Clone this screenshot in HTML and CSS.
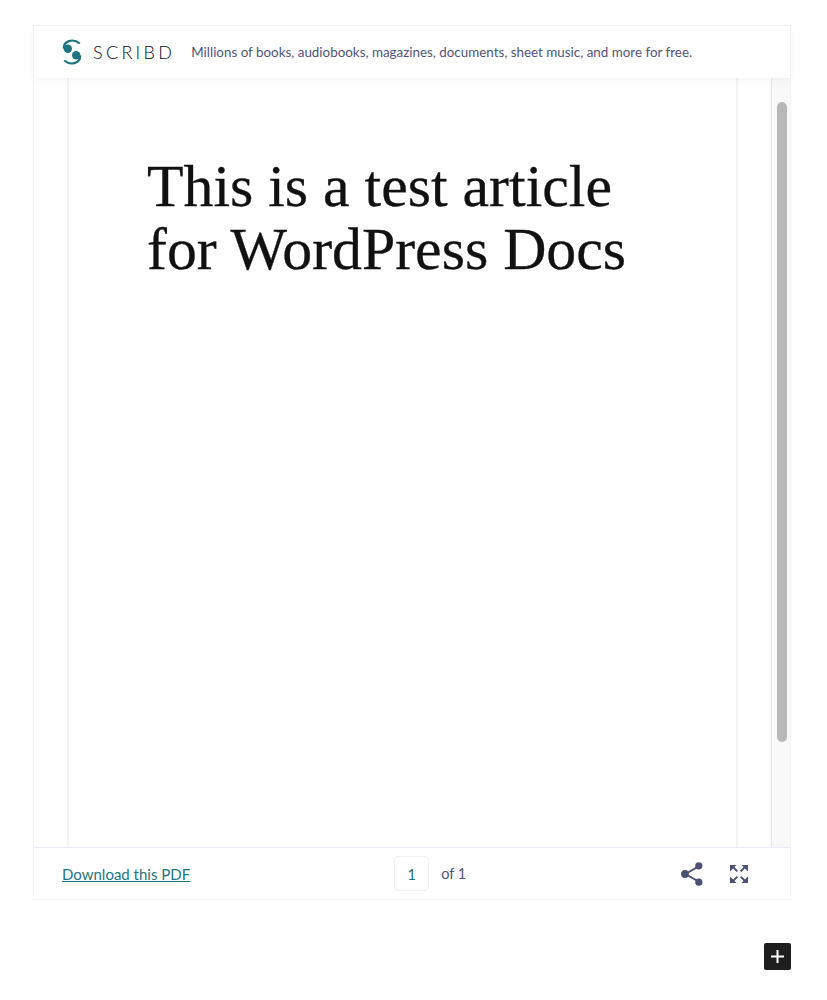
FILE: index.html
```html
<!DOCTYPE html>
<html lang="en">
<head>
  <meta charset="UTF-8">
  <meta name="viewport" content="width=device-width, initial-scale=1.0">
  <title>Scribd Embed</title>
  <link rel="stylesheet" href="styles.css">
</head>
<body>
  <div class="embed">
    <div class="embed-header">
      <svg class="logo-mark" width="20" height="26" viewBox="0 0 20 26">
        <circle cx="5.800" cy="9.800" r="4.200" fill="#1e7480"/>
        <circle cx="14.200" cy="16.200" r="4.200" fill="#1e7480"/>
        <path d="M1.800 9.500 C1.500 2.500 10.500 -1.500 17.800 4.500" fill="none" stroke="#1e7480" stroke-width="2.200"/>
        <path d="M18.200 16.500 C18.500 23.500 9.500 27.500 2.200 21.500" fill="none" stroke="#1e7480" stroke-width="2.200"/>
      </svg>
      <span class="logo-text">SCRIBD</span>
      <span class="tagline">Millions of books, audiobooks, magazines, documents, sheet music, and more for free.</span>
    </div>

    <div class="embed-body">
      <div class="doc-gutter"></div>
      <div class="doc-page">
        <h1>This is a test article for WordPress Docs</h1>
      </div>
      <div class="doc-gap"></div>
      <div class="scroll-track">
        <div class="scroll-thumb"></div>
      </div>
    </div>

    <div class="embed-footer">
      <a class="download" href="#">Download this PDF</a>
      <div class="pager">
        <span class="page-box">1</span>
        <span class="page-of">of 1</span>
      </div>
      <div class="actions">
        <svg width="24" height="26" viewBox="0 0 24 26">
          <path d="M18.500 5.500 L5.500 13 L18.500 20.500" fill="none" stroke="#4a5173" stroke-width="2"/>
          <circle cx="18.800" cy="4.800" r="3.600" fill="#4a5173"/>
          <circle cx="5" cy="13" r="3.900" fill="#4a5173"/>
          <circle cx="18.800" cy="21.200" r="3.600" fill="#4a5173"/>
        </svg>
        <svg width="20" height="20" viewBox="0 0 20 20">
          <path d="M1 1 H7.500 L5.400 3.100 L9 6.700 L7.700 8 L4.100 4.400 L1 7.500 Z" fill="#4a5173"/>
          <path d="M19 1 H12.500 L14.600 3.100 L11 6.700 L12.300 8 L15.900 4.400 L19 7.500 Z" fill="#4a5173"/>
          <path d="M1 19 H7.500 L5.400 16.900 L9 13.300 L7.700 12 L4.100 15.600 L1 12.500 Z" fill="#4a5173"/>
          <path d="M19 19 H12.500 L14.600 16.900 L11 13.300 L12.300 12 L15.900 15.600 L19 12.500 Z" fill="#4a5173"/>
        </svg>
      </div>
    </div>
  </div>

  <div class="plus-row">
    <button class="plus-button">
      <svg width="15" height="15" viewBox="0 0 15 15">
        <path d="M7.500 1 V14 M1 7.500 H14" stroke="#fff" stroke-width="2"/>
      </svg>
    </button>
  </div>
</body>
</html>
```

FILE: styles.css
```css
body {
  font-family: Lato, Arial, sans-serif;
  margin: 0;
  padding: 25px 36px 0 33px;
  background-color: #fff;
}

.embed {
  display: flex;
  flex-direction: column;
  height: 875px;
  border: 1px solid #f3f3f8;
  box-sizing: border-box;
}

.embed-header {
  display: flex;
  align-items: center;
  height: 52px;
  flex: none;
  padding-left: 28px;
  background: #fff;
  box-shadow: 0 2px 8px rgba(0, 0, 0, 0.05);
  position: relative;
}

.logo-mark {
  margin-right: 11px;
}

.logo-text {
  font-weight: 300;
  font-size: 18px;
  letter-spacing: 3.3px;
  color: #0c0c1a;
  margin-right: 16px;
}

.tagline {
  font-size: 13.4px;
  color: #4f5577;
}

.embed-body {
  display: flex;
  flex: 1;
  min-height: 0;
}

.doc-gutter {
  width: 35px;
  flex: none;
  border-right: 2px solid #f3f3f5;
  box-sizing: border-box;
}

.doc-page {
  width: 667px;
  flex: none;
  box-sizing: border-box;
  padding: 77px 60px 0 78px;
}

.doc-page h1 {
  margin: 0;
  font-family: "Liberation Serif", serif;
  font-weight: 400;
  font-size: 59.800px;
  line-height: 63px;
  color: #111;
  -webkit-text-stroke: 0.3px #111;
}

.doc-gap {
  width: 35px;
  flex: none;
  border-left: 2px solid #f3f3f5;
  box-sizing: border-box;
}

.scroll-track {
  flex: 1;
  border-left: 1px solid #e6e6e8;
  background: #f9f9f9;
  padding: 24px 3px 0 5px;
}

.scroll-thumb {
  height: 640px;
  width: 10px;
  background: #b8b8b8;
  border-radius: 5px;
}

.embed-footer {
  display: flex;
  align-items: center;
  height: 51px;
  flex: none;
  border-top: 1px solid #ebebf5;
  padding: 0 41px 0 28px;
  position: relative;
}

.download {
  font-size: 15px;
  color: #1e7480;
}

.pager {
  display: flex;
  align-items: center;
  margin-left: 204px;
}

.page-box {
  width: 35px;
  height: 35px;
  line-height: 35px;
  text-align: center;
  box-sizing: border-box;
  border: 1px solid #f0f0f5;
  border-radius: 4px;
  font-size: 14.500px;
  color: #1e7480;
  margin-right: 12px;
}

.page-of {
  font-size: 14.500px;
  color: #4f5577;
}

.actions {
  display: flex;
  align-items: center;
  gap: 25px;
  margin-left: auto;
}

.plus-row {
  display: flex;
  justify-content: flex-end;
  margin-top: 43px;
}

.plus-button {
  width: 27px;
  height: 27px;
  padding: 0;
  border: none;
  border-radius: 2px;
  background: #1e1e1e;
  display: flex;
  align-items: center;
  justify-content: center;
}
```
